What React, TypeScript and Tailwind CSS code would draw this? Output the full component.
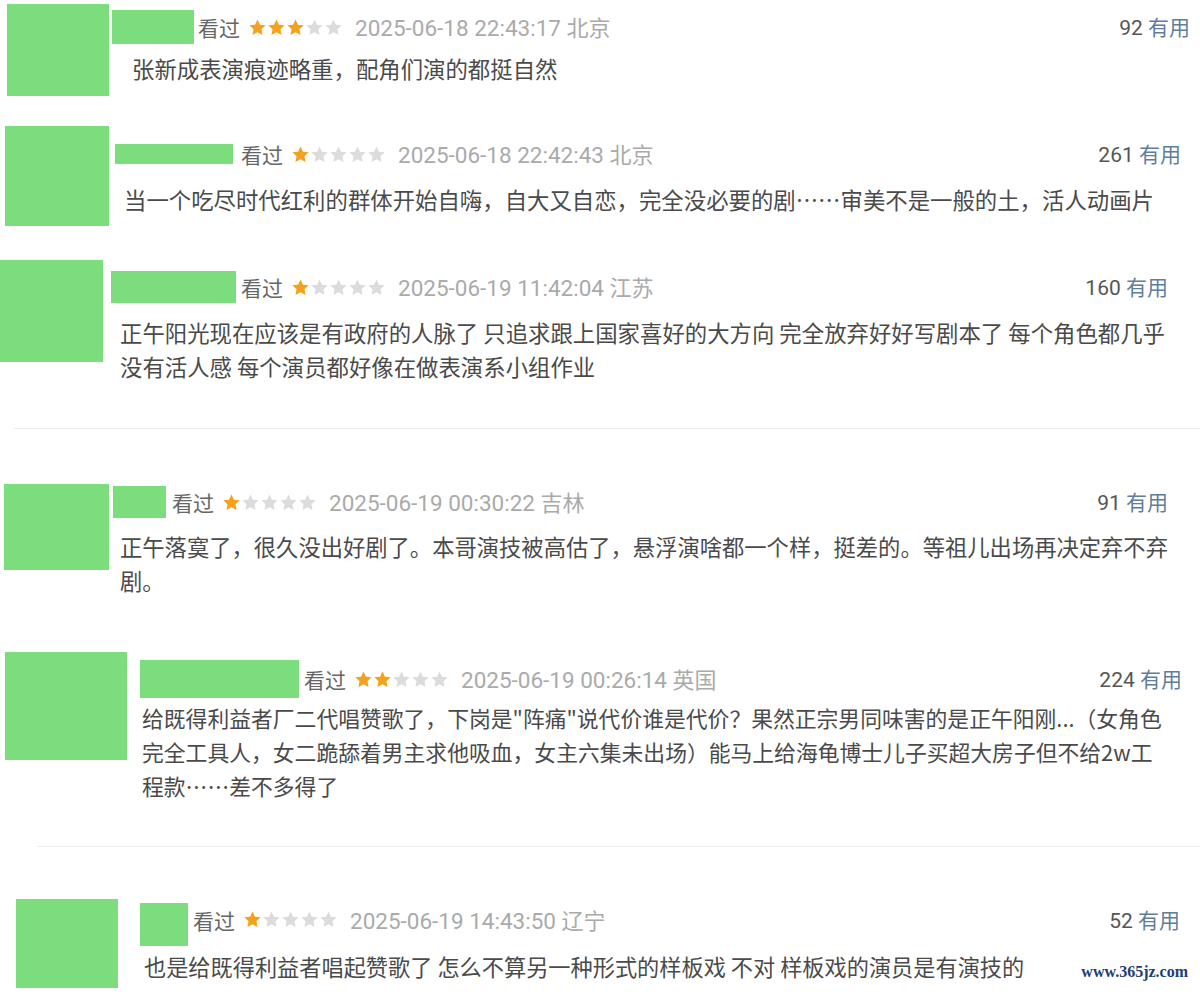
import React from "react";

const cjk = "font-['Noto_Sans_CJK_SC','Noto_Sans',sans-serif]";

function Stars({ n }: { n: number }) {
  return (
    <div className="flex items-center ml-[8px]">
      {[0, 1, 2, 3, 4].map((i) => (
        <svg key={i} width="19" height="19" viewBox="0 0 24 24">
          <path
            d="M12 1.8l3.1 6.6 7.2.9-5.3 5 1.4 7.1L12 17.9l-6.4 3.5 1.4-7.1-5.3-5 7.2-.9z"
            fill={i < n ? "#f4a21d" : "#dcdcdc"}
          />
        </svg>
      ))}
    </div>
  );
}

interface CommentProps {
  block: string;
  avatar: string;
  body: string;
  name: string;
  gap: string;
  text: string;
  stars: number;
  date: string;
  place: string;
  count: string;
  lines: string[];
}

const Comment = ({
  block,
  avatar,
  body,
  name,
  gap,
  text,
  stars,
  date,
  place,
  count,
  lines,
}: CommentProps) => {
  return (
    <div className={`flex ${block}`}>
      <div className={`bg-[#7bdd7b] shrink-0 ${avatar}`} />
      <div className={`flex-1 min-w-0 flex flex-col ${body}`}>
        <div className="flex items-center">
          <div className={`bg-[#7bdd7b] shrink-0 ${name}`} />
          <span className={`${gap} text-[21px] leading-[20px] text-[#666] ${cjk}`}>看过</span>
          <Stars n={stars} />
          <span className="ml-[12px] text-[22.5px] leading-[20px] text-[#aaa] font-['Roboto','Noto_Sans_CJK_SC',sans-serif] whitespace-nowrap">
            {date} <span className={`text-[22px] ${cjk}`}>{place}</span>
          </span>
          <span className="ml-auto text-[21px] leading-[20px] text-[#555] font-['Roboto','Noto_Sans_CJK_SC',sans-serif] whitespace-nowrap">
            {count} <span className={`text-[#5f7d9c] ${cjk}`}>有用</span>
          </span>
        </div>
        <div className={`${text} leading-[34px] text-[#4a4a4a] ${cjk}`}>
          {lines.map((l, i) => (
            <div key={i} className="whitespace-nowrap">
              {l}
            </div>
          ))}
        </div>
      </div>
    </div>
  );
};

export default function App() {
  return (
    <div className="relative w-[1200px] h-[1000px] bg-white overflow-hidden">
      <Comment
        block="h-[110px]"
        avatar="ml-[7px] mt-[4px] w-[102px] h-[92px]"
        body="ml-[3px] mt-[10px] pr-[10px]"
        name="w-[82px] h-[34px]"
        gap="ml-[4px]"
        text="pl-[20px] mt-[7px] text-[22.4px]"
        stars={3}
        date="2025-06-18 22:43:17"
        place="北京"
        count="92"
        lines={["张新成表演痕迹略重，配角们演的都挺自然"]}
      />
      <Comment
        block="h-[135px]"
        avatar="ml-[5px] mt-[16px] w-[104px] h-[100px]"
        body="ml-[6px] mt-[33px] pr-[19px]"
        name="w-[118px] h-[20px]"
        gap="ml-[8px]"
        text="pl-[9px] mt-[17px] text-[22.4px]"
        stars={1}
        date="2025-06-18 22:42:43"
        place="北京"
        count="261"
        lines={[
          "当一个吃尽时代红利的群体开始自嗨，自大又自恋，完全没必要的剧……审美不是一般的土，活人动画片",
        ]}
      />
      <Comment
        block="h-[183px]"
        avatar="ml-0 mt-[15px] w-[103px] h-[102px]"
        body="ml-[8px] mt-[26px] pr-[32px]"
        name="w-[125px] h-[32px]"
        gap="ml-[5px]"
        text="pl-[9px] mt-[12px] text-[22.4px]"
        stars={1}
        date="2025-06-19 11:42:04"
        place="江苏"
        count="160"
        lines={[
          "正午阳光现在应该是有政府的人脉了 只追求跟上国家喜好的大方向 完全放弃好好写剧本了 每个角色都几乎",
          "没有活人感 每个演员都好像在做表演系小组作业",
        ]}
      />
      <div className="ml-[14px] h-px bg-[#ececec]" />
      <Comment
        block="h-[206px]"
        avatar="ml-[4px] mt-[55px] w-[105px] h-[86px]"
        body="ml-[4px] mt-[57px] pr-[32px]"
        name="w-[53px] h-[32px]"
        gap="ml-[6px]"
        text="pl-[7px] mt-[11px] text-[22.3px]"
        stars={1}
        date="2025-06-19 00:30:22"
        place="吉林"
        count="91"
        lines={[
          "正午落寞了，很久没出好剧了。本哥演技被高估了，悬浮演啥都一个样，挺差的。等祖儿出场再决定弃不弃",
          "剧。",
        ]}
      />
      <Comment
        block="h-[211px]"
        avatar="ml-[5px] mt-[17px] w-[122px] h-[108px]"
        body="ml-[13px] mt-[25px] pr-[18px]"
        name="w-[159px] h-[38px]"
        gap="ml-[5px]"
        text="pl-[2px] mt-[3px] text-[21.8px]"
        stars={2}
        date="2025-06-19 00:26:14"
        place="英国"
        count="224"
        lines={[
          "给既得利益者厂二代唱赞歌了，下岗是\"阵痛\"说代价谁是代价？果然正宗男同味害的是正午阳刚...（女角色",
          "完全工具人，女二跪舔着男主求他吸血，女主六集未出场）能马上给海龟博士儿子买超大房子但不给2w工",
          "程款……差不多得了",
        ]}
      />
      <div className="ml-[38px] h-px bg-[#ececec]" />
      <Comment
        block="h-[152px]"
        avatar="ml-[16px] mt-[52px] w-[102px] h-[89px]"
        body="ml-[22px] mt-[46px] pr-[20px]"
        name="w-[48px] h-[43px] mt-[10px]"
        gap="ml-[5px]"
        text="pl-[4px] mt-[3px] text-[22.2px]"
        stars={1}
        date="2025-06-19 14:43:50"
        place="辽宁"
        count="52"
        lines={[
          "也是给既得利益者唱起赞歌了 怎么不算另一种形式的样板戏 不对 样板戏的演员是有演技的",
        ]}
      />
      <div className="absolute right-[12px] bottom-[16px] text-[16px] font-bold text-[#1d3c78] font-['Liberation_Serif',serif]">
        www.365jz.com
      </div>
    </div>
  );
}
